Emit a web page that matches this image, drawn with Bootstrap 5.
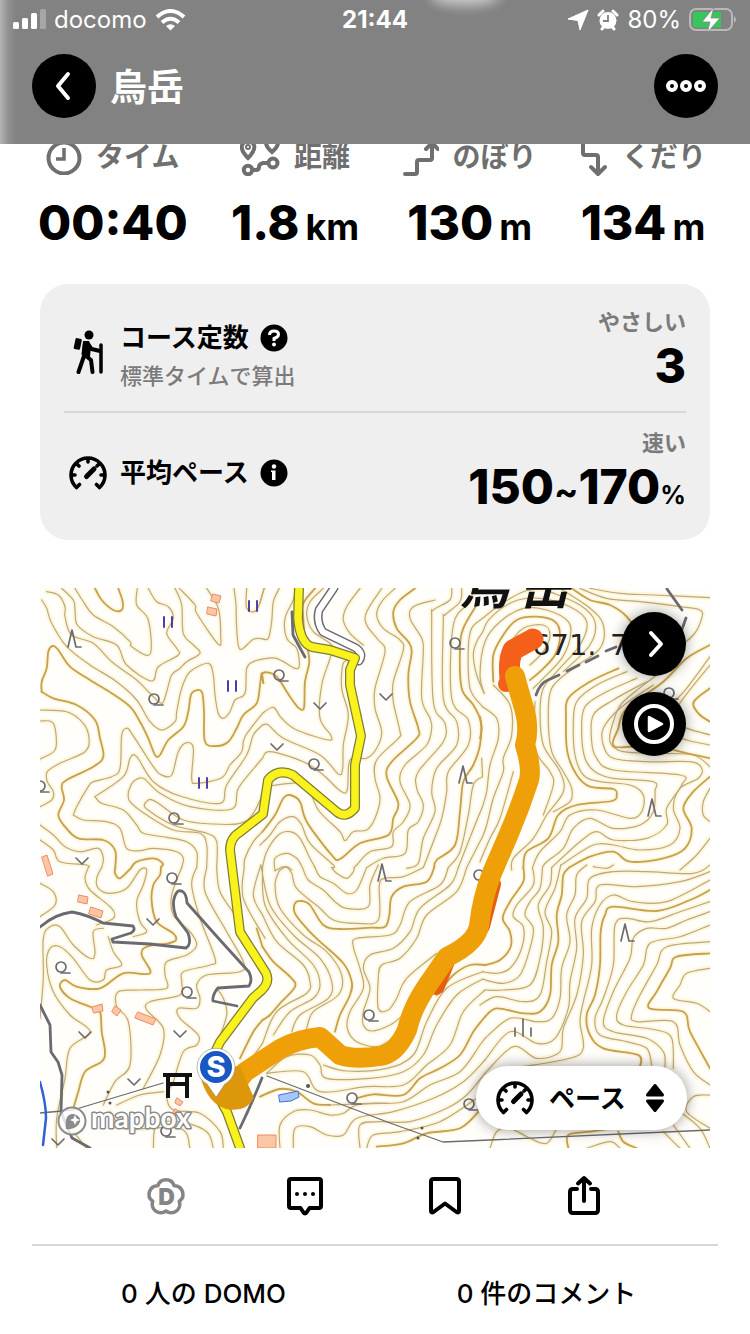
<!DOCTYPE html>
<html lang="ja">
<head>
<meta charset="utf-8">
<meta name="viewport" content="width=device-width, initial-scale=1">
<title>烏岳</title>
<link href="https://cdn.jsdelivr.net/npm/bootstrap@5.3.0/dist/css/bootstrap.min.css" rel="stylesheet">
<style>
  body { font-family: Inter, "Noto Sans CJK JP", sans-serif; color: #000; background: #fff; }
  .app-head { background: linear-gradient(90deg, #b4b4b4 0, #929292 8px, #828282 16px); height: 144px; color: #fff; overflow: hidden; }
  .app-head::before { content: ""; position: absolute; left: 430px; top: -14px; width: 70px; height: 20px; border-radius: 50%; background: #c8c8c8; filter: blur(6px); }
  .status-bar { height: 40px; font-size: 24px; line-height: 40px; padding: 0 12px; display: grid; grid-template-columns: 1fr auto 1fr; position: relative; }
  .status-bar .clock { font-weight: 700; }
  .title-bar { padding: 12px 32px 0; }
  .screen-title { font-size: 37px; font-weight: 700; line-height: 64px; margin: 4px 0 0 14px; }
  .round-btn { width: 64px; height: 64px; border: 0; border-radius: 50%; background: #000; color: #fff; padding: 0; display: flex; align-items: center; justify-content: center; }
  main { padding-top: 137px; }
  .stats { padding: 0 44px 0 38px; margin: 0; }
  .stats dt { font-size: 28px; line-height: 40px; color: #6f6f6f; font-weight: 700; gap: 14px; display: flex; align-items: center; justify-content: center; }
  .stats dd { margin: 22px 0 0; line-height: 48px; }
  .figure-num { font-size: 48px; line-height: 48px; font-weight: 800; }
  .figure-num small { font-size: 36px; font-weight: 700; margin-left: 6px; }
  .summary { margin: 33px 40px 0; background: #efefef; border-radius: 28px; padding: 0 24px; }
  .summary-row { height: 127px; }
  .summary-row + .summary-row { border-top: 2px solid #d7d7d7; height: 129px; padding-bottom: 8px; }
  .row-icon { width: 48px; flex: none; display: flex; justify-content: center; margin-right: 8px; }
  .row-lead { padding-top: 16px; }
  .row-name { font-size: 26px; line-height: 36px; font-weight: 700; gap: 11px; }
  .muted { font-size: 22px; line-height: 32px; color: #7b7b7b; font-weight: 700; }
  .note { font-weight: 500; }
  .help-btn { border: 0; background: none; padding: 0; display: flex; }
  .map-box { margin: 48px 40px 0; overflow: hidden; }
  .map-box > svg { display: block; width: 100%; height: auto; }
  .map-tools { top: 24px; right: 24px; gap: 16px; }
  .lift { box-shadow: 0 0 14px rgba(0,0,0,.4); }
  .mode-pick { right: 23px; bottom: 18px; }
  .mode-pick select { appearance: none; border: 0; border-radius: 32px; background: #fff; height: 64px; width: 211px; padding: 0 60px 0 73px; font-size: 26px; font-weight: 700; color: #000; }
  .mode-pick svg { position: absolute; top: 50%; transform: translateY(-50%); pointer-events: none; }
  .mode-pick svg:first-of-type { left: 20px; }
  .mode-pick svg:last-of-type { right: 22px; }
  .actions { background: #fff; padding: 0 32px; }
  .action-icons { height: 96px; padding: 0 64px; }
  .action-icons button { border: 0; background: none; padding: 0; width: 25%; display: flex; justify-content: center; align-items: center; }
  .counts { border-top: 2px solid #d7d7d7; height: 90px; padding-top: 8px; }
  .counts a { font-size: 26px; line-height: 36px; font-weight: 500; color: #000; text-decoration: none; }
  .minor-line { stroke: #b9a980; stroke-width: 1.2px; }
  .index-line { stroke: #c4a050; stroke-width: 1.8px; }
  .halo { stroke: #fff6da; stroke-width: 5px; }
</style>
</head>
<body>
<header class="app-head fixed-top">
  <div class="status-bar">
    <div class="d-flex align-items-center gap-2">
      <svg width="34" height="22" viewBox="0 0 34 22" fill="#fff"><rect x="1" y="13" width="6" height="7" rx="1.500"/><rect x="10" y="9" width="6" height="11" rx="1.500"/><rect x="19" y="4" width="6" height="16" rx="1.500"/><rect x="28" y="0" width="6" height="20" rx="1.500" opacity=".3"/></svg>
      <span>docomo</span>
      <svg width="31" height="22" viewBox="0 0 31 22" fill="none" stroke="#fff" stroke-width="4"><path d="M2 8Q15.500-4 29 8M7 13.500Q15.500 6 24 13.500"/><path d="M15.500 21.500l-4.500-4.500q4.500-3.500 9 0z" fill="#fff" stroke="none"/></svg>
    </div>
    <div class="clock">21:44</div>
    <div class="d-flex align-items-center justify-content-end">
      <svg class="me-2" width="22" height="22" viewBox="0 0 22 22" fill="#fff"><path d="M21 1 13 21 11 11.500 1 10z" stroke="#fff" stroke-linejoin="round"/></svg>
      <svg class="me-2" width="22" height="22" viewBox="0 0 22 22"><circle cx="11" cy="11.500" r="8.500" fill="#fff"/><path d="M2 6l4-4M20 6l-4-4M5 20l2-2.500M17 20l-2-2.500" stroke="#fff" stroke-width="3" stroke-linecap="round"/><path d="M11 6v6H6" fill="none" stroke="#828282" stroke-width="1.800"/></svg>
      <span class="me-2">80%</span>
      <svg width="49" height="26" viewBox="0 0 49 26"><rect x="1" y="2" width="42" height="21" rx="6" fill="none" stroke="#b9b9b9" stroke-width="2"/><path d="M7 5h25v15.500H7a3 3 0 0 1-3-3V8a3 3 0 0 1 3-3z" fill="#36c75a"/><path d="M45 9q4 3.500 0 7z" fill="#b9b9b9"/><path d="M25 0 13 15h8l-3 11 13-15h-9z" fill="#fff" stroke="#828282" stroke-width=".8"/></svg>
    </div>
  </div>
  <div class="title-bar d-flex align-items-center">
    <button class="round-btn" type="button" aria-label="戻る"><svg width="24" height="32" viewBox="0 0 24 32" fill="none" stroke="#fff" stroke-width="4" stroke-linecap="round" stroke-linejoin="round"><path d="M16 4 6 16l10 12"/></svg></button>
    <h1 class="screen-title">烏岳</h1>
    <button class="round-btn ms-auto" type="button" aria-label="メニュー"><svg width="42" height="14" viewBox="0 0 42 14" fill="none" stroke="#fff" stroke-width="4"><circle cx="7" cy="7" r="4"/><circle cx="21" cy="7" r="4"/><circle cx="35" cy="7" r="4"/></svg></button>
  </div>
</header>

<main>
  <dl class="stats d-flex justify-content-between text-center">
    <div>
      <dt><svg width="36" height="36" viewBox="0 0 36 36" fill="none" stroke="#6f6f6f" stroke-width="4"><circle cx="18" cy="19" r="15.500"/><path d="M18 9v11h-8" stroke-width="3.500"/></svg>タイム</dt>
      <dd class="figure-num">00:40</dd>
    </div>
    <div>
      <dt><svg width="40" height="38" viewBox="0 0 40 38" fill="none" stroke="#6f6f6f" stroke-width="4"><path d="M8 20Q1 13 1.800 8a6.500 6.500 0 0 1 12.500 0Q15 13 8 20z"/><circle cx="8" cy="9" r="1"/><path d="M32 14Q25 8 26 3a6.500 6.500 0 0 1 12 0Q39 8 32 14z"/><circle cx="8" cy="32" r="4.200"/><circle cx="33" cy="25" r="4.500"/><path d="M12 32h4q3 0 3-3t4-4h5"/></svg>距離</dt>
      <dd class="figure-num">1.8<small>km</small></dd>
    </div>
    <div>
      <dt><svg width="36" height="40" viewBox="0 0 36 40" fill="none" stroke="#6f6f6f" stroke-width="4" stroke-linecap="round" stroke-linejoin="round"><path d="M2 37h10q2 0 2-2V25q0-2 2-2h11q2 0 2-2V8M23 12l6-6 6 6"/></svg>のぼり</dt>
      <dd class="figure-num">130<small>m</small></dd>
    </div>
    <div>
      <dt><svg width="28" height="40" viewBox="0 0 28 40" fill="none" stroke="#6f6f6f" stroke-width="4" stroke-linecap="round" stroke-linejoin="round"><path d="M3 2v14q0 2 2 2h11q2 0 2 2v16M11 30l7 7 7-7"/></svg>くだり</dt>
      <dd class="figure-num">134<small>m</small></dd>
    </div>
  </dl>

  <section class="summary">
    <div class="summary-row d-flex align-items-center">
      <span class="row-icon pt-2"><svg width="30" height="44" viewBox="0 0 30 44" fill="#000"><circle cx="16" cy="5" r="4.500"/><path d="M3.500 8 8 9q1 .3.800 1.300L7 19q-.3 1-1.300.8L1.500 19q-1-.3-.8-1.300L2.500 9q.2-1 1-1z"/><path d="M12 13l-1.500 11 7.500 6 1.500 12M11 26 5.500 42M14.500 13.500l4 5.500 8.500 2" fill="none" stroke="#000" stroke-width="4" stroke-linecap="round" stroke-linejoin="round"/><path d="M10 11h6l2 5-1 11-8-2z"/><path d="M28 15v27" stroke="#000" stroke-width="3.500" stroke-linecap="round"/></svg></span>
      <div class="row-lead">
        <div class="row-name d-flex align-items-center">コース定数
          <button class="help-btn" type="button" aria-label="コース定数について"><svg width="28" height="28" viewBox="0 0 28 28"><circle cx="14" cy="14" r="13.500"/><path d="M9.500 11q0-4 4.500-4t4.500 3.500Q18.500 13 14 14.500v2.500" fill="none" stroke="#fff" stroke-width="3"/><circle cx="14" cy="20.500" r="1.900" fill="#fff"/></svg></button>
        </div>
        <div class="muted note mt-1">標準タイムで算出</div>
      </div>
      <div class="ms-auto text-end">
        <div class="muted">やさしい</div>
        <div class="figure-num mt-1">3</div>
      </div>
    </div>
    <div class="summary-row d-flex align-items-center">
      <span class="row-icon"><svg width="38" height="34" viewBox="0 0 38 34"><g id="gauge" fill="none" stroke="#000" stroke-width="3.600" stroke-linecap="round"><path d="M7.500 31.500A17 17 0 1 1 30.500 31.500M7.500 31.500l3-3M30.500 31.500l-3-3M2.500 19H6M32 19h3.500M7.500 7.500 10 10M19 2.500V6M30.500 7.500 28 10" stroke-width="3.600"/><path d="M17.500 20.500 25 13" stroke-width="5"/></g></svg></span>
      <div class="row-name d-flex align-items-center">平均ペース
        <button class="help-btn" type="button" aria-label="平均ペースについて"><svg width="28" height="28" viewBox="0 0 28 28"><circle cx="14" cy="14" r="13.500"/><circle cx="14" cy="7.500" r="2.200" fill="#fff"/><path d="M11 11.500h4.500V21h-3.500v-8H11z" fill="#fff"/></svg></button>
      </div>
      <div class="ms-auto text-end">
        <div class="muted">速い</div>
        <div class="figure-num mt-1">150<small class="m-0">~</small>170<small class="fs-3 m-0">%</small></div>
      </div>
    </div>
  </section>

  <section class="map-box position-relative">
    <svg viewBox="0 0 670 560" fill="none" stroke-linejoin="round" stroke-linecap="round" role="img" aria-label="コース地図">
      <defs>
        <g id="minor"></g><g id="major"></g>
        <g id="leaf"><circle r="5" cx="0" cy="0"/><path d="M0 6h9"/></g>
        <path id="field" d="M-6-3 0 3 6-3"/>
        <path id="pine" d="M-4 9 0-8 4 9H9"/>
        <path id="paddy" d="M-4-5V5M4-5V5"/>
      </defs>
      <rect width="670" height="560" fill="#fffefb"/>
      <use href="#minor" class="halo"/><use href="#major" class="halo"/>
      <use href="#minor" class="minor-line"/><use href="#major" class="index-line"/>
      <!-- lanes, stream and power line -->
      <g stroke="#6a6a70" stroke-width="2.800">
        <path d="M0 339Q15 326 32 324 48 327 63 335L93 338Q96 342 91 345L72 351 73 354 110 356 146 360Q152 356 148 345L136 329Q130 312 138 303 146 301 147 315L180 352 209 384Q213 392 209 398L178 400Q172 407 173 413L197 418"/>
        <path d="M0 417 10 437 11 464 18 474 22 487 21 524 32 550 50 560"/>
        <path d="M200 540Q212 515 222 490"/>
        <path d="M252 24 253 47 265 69"/>
        <path d="M627 1 642 22M646 30l-5 14"/>
        <path d="M496 107Q500 95 508 92L519 87M527 83l12-6M546 74l12-6M566 63l10-4"/>
      </g>
      <path d="M294 0 279 22Q276 34 283 44L316 60Q324 66 319 73" stroke="#6a6a70" stroke-width="9"/>
      <path d="M294 0 279 22Q276 34 283 44L316 60Q324 66 319 73" stroke="#fff" stroke-width="6"/>
      <path d="M0 525 33 522 123 495M227 488 350 535 403 554 450 552 670 542" stroke="#6a6a70" stroke-width="1.300"/>
      <path d="M0 494Q6 515 6 530L3 557" stroke="#2e62d6" stroke-width="2.500"/>
      <!-- main road -->
      <g stroke="#7f7c35" stroke-width="10">
        <path d="M259 0 258 30Q260 55 272 59L290 62 315 70 310 82 310 97 321 148 315 177 315 220Q306 231 297 224L253 187Q238 180 228 192L223 226 200 244Q190 250 190 262L200 344 226 385Q230 394 222 402L213 410 180 454 165 485 187 524 200 560"/>
      </g>
      <path d="M259 0 258 30Q260 55 272 59L290 62 315 70 310 82 310 97 321 148 315 177 315 220Q306 231 297 224L253 187Q238 180 228 192L223 226 200 244Q190 250 190 262L200 344 226 385Q230 394 222 402L213 410 180 454 165 485 187 524 200 560" stroke="#f9f21c" stroke-width="7.500"/>
      <!-- buildings -->
      <g fill="#fbc6a5" stroke="#f08a60" stroke-width="1">
        <path d="M173 6l8 2-2 7-8-2zM168 19l9 2-1 7-9-2zM2 269l5-2 6 19-5 2zM39 307l9 2-1 7-9-2zM51 319l12 4-2 7-12-4zM52 419l10-3 1 7-9 2zM75 418l6 4-4 6-5-4zM98 424l18 7-3 6-18-7zM137 510l6 4-3 4-5-3zM135 521l6 3-3 4-5-3zM218 547h18v13h-18z"/>
      </g>
      <path d="M239 507l19-4 1 6-8 4-11 1z" fill="#a9c6fb" stroke="#3c6fe0"/>
      <!-- vegetation marks -->
      <g stroke="#6b6b70" stroke-width="1.700">
        <use href="#leaf" x="114" y="111"/><use href="#leaf" x="134" y="230"/><use href="#leaf" x="239" y="87"/><use href="#leaf" x="274" y="176"/><use href="#leaf" x="415" y="55"/><use href="#leaf" x="0" y="198"/><use href="#leaf" x="132" y="290"/><use href="#leaf" x="21" y="379"/><use href="#leaf" x="147" y="404"/><use href="#leaf" x="126" y="543"/><use href="#leaf" x="329" y="427"/><use href="#leaf" x="312" y="510"/><use href="#leaf" x="429" y="516"/><use href="#leaf" x="439" y="287"/><use href="#leaf" x="629" y="105"/>
        <use href="#field" x="42" y="273"/><use href="#field" x="280" y="118"/><use href="#field" x="346" y="109"/><use href="#field" x="237" y="159"/><use href="#field" x="113" y="334"/><use href="#field" x="45" y="447"/><use href="#field" x="140" y="446"/><use href="#field" x="94" y="494"/><use href="#field" x="18" y="554"/>
        <use href="#pine" x="32" y="50"/><use href="#pine" x="423" y="186"/><use href="#pine" x="342" y="284"/><use href="#pine" x="612" y="219"/><use href="#pine" x="585" y="344"/>
        <path d="M475 440v8M483 431v17M491 440v8"/>
      </g>
      <g stroke="#4d3fa8" stroke-width="2"><use href="#paddy" x="128" y="34"/><use href="#paddy" x="213" y="18"/><use href="#paddy" x="192" y="98"/><use href="#paddy" x="163" y="195"/></g>
      <g fill="#555"><circle cx="268" cy="498" r="2"/><circle cx="68" cy="504" r="1.500"/><circle cx="70" cy="515" r="1.500"/><circle cx="382" cy="540" r="1.500"/><circle cx="378" cy="550" r="1.500"/></g>
      <text x="420" y="16" font-family="'Noto Sans CJK JP', sans-serif" font-size="50" font-weight="700" font-style="italic" fill="#111">烏</text>
      <text x="480" y="16" font-family="'Noto Sans CJK JP', sans-serif" font-size="50" font-weight="700" font-style="italic" fill="#111">岳</text>
      <path d="M470 64l5-10 5 10z" fill="#222"/>
      <g font-family="'DejaVu Sans', sans-serif" font-size="29" fill="#222"><text x="492" y="67">671.</text><text x="570" y="67">7</text></g>
      <!-- recorded track -->
      <path d="M493 51Q482 57 473 62 468 72 470 90" stroke="#f4601a" stroke-width="21"/>
      <circle cx="466" cy="96" r="8" fill="#f4601a"/>
      <path d="M452 296 441 338M406 373 396 398" stroke="#e85d10" stroke-width="18"/>
      <path d="M475 88Q478 100 484 120T485 157Q492 180 489 192 480 220 468 248L452 285Q442 310 439 338 436 355 407 369L387 398Q372 420 367 442 356 466 340 468 315 472 300 467L280 449Q258 451 240 461L205 484 190 503" stroke="#efa008" stroke-width="20"/>
      <path d="M160 488Q168 516 186 521 206 525 214 510L200 478 180 480z" fill="#dd970b"/>
      <!-- shrine -->
      <path d="M123 487h29M128 487v23M147 487v23M126 496h23" stroke="#111" stroke-width="4" stroke-linecap="butt"/>
      <!-- start pin -->
      <path d="M176 509 167 496A19 19 0 1 1 185 496z" fill="#fff" stroke="#888" stroke-width=".6"/>
      <circle cx="176" cy="479" r="16" fill="#1957c2"/>
      <text x="176" y="489" text-anchor="middle" font-family="Inter, sans-serif" font-size="29" font-weight="800" fill="#fff">S</text>
      <!-- map credit -->
      <circle cx="32" cy="533" r="13.500" fill="#fff" fill-opacity=".8" stroke="#8b8b8b" stroke-width="2"/>
      <path d="M26 541q-2-16 8-15 9 3 5 10-4 6-13 5z" fill="#8b8b8b"/><path d="m35 527 1.500 3.500L40 532l-3.500 1.500L35 537l-1.500-3.500L30 532l3.500-1.500z" fill="#fff"/>
      <text x="51" y="540" font-family="Lato, sans-serif" font-size="28" font-weight="700" fill="#fff" stroke="#8b8b8b" stroke-width="3" paint-order="stroke">mapbox</text>
    </svg>
    <div class="map-tools position-absolute d-flex flex-column">
      <button class="round-btn lift" type="button" aria-label="地図を開く"><svg width="24" height="32" viewBox="0 0 24 32" fill="none" stroke="#fff" stroke-width="4" stroke-linecap="round" stroke-linejoin="round"><path d="M9 5l10 11L9 27"/></svg></button>
      <button class="round-btn lift" type="button" aria-label="再生"><svg width="42" height="42" viewBox="0 0 42 42"><circle cx="21" cy="21" r="18" fill="none" stroke="#fff" stroke-width="4"/><path d="M16 14v14l13-7z" fill="#fff" stroke="#fff" stroke-width="2.500" stroke-linejoin="round"/></svg></button>
    </div>
    <label class="mode-pick position-absolute">
      <select class="lift" aria-label="表示"><option>ペース</option></select>
      <svg width="38" height="34" viewBox="0 0 38 34"><use href="#gauge"/></svg>
      <svg width="20" height="30" viewBox="0 0 20 30"><path d="M10 2.500 17.500 12h-15zM10 27.500 17.500 18h-15z" stroke="#000" stroke-width="3" stroke-linejoin="round"/></svg>
    </label>
  </section>
</main>

<footer class="actions sticky-bottom">
  <div class="action-icons d-flex">
    <button type="button" aria-label="DOMO"><svg width="42" height="42" viewBox="0 0 42 42"><path d="M12.800 10.700a8.600 8.600 0 0 1 16.400 0A8.600 8.600 0 0 1 34.300 26.300A8.600 8.600 0 0 1 21 36A8.600 8.600 0 0 1 7.700 26.300A8.600 8.600 0 0 1 12.800 10.700z" fill="none" stroke="#858585" stroke-width="3.600" stroke-linejoin="round"/><text x="21.500" y="30" text-anchor="middle" font-size="23" font-weight="900" fill="#858585">D</text></svg></button>
    <button type="button" aria-label="コメント"><svg width="38" height="42" viewBox="0 0 38 42" fill="none" stroke="#000" stroke-width="4" stroke-linejoin="round"><path d="M5 4h28q2 0 2 2v25q0 2-2 2h-9.500l-3 4.500q-1.500 2-3 0l-3-4.500H5q-2 0-2-2V6q0-2 2-2z"/><g fill="#000" stroke="none"><circle cx="11" cy="19" r="2"/><circle cx="19" cy="19" r="2"/><circle cx="27" cy="19" r="2"/></g></svg></button>
    <button type="button" aria-label="ブックマーク"><svg width="34" height="42" viewBox="0 0 34 42" fill="none" stroke="#000" stroke-width="4" stroke-linejoin="round"><path d="M5.500 4h23q2.500 0 2.500 2.500v29q0 3-2.500 1.500L17 28.500 5.500 37Q3 38.500 3 35.500v-29Q3 4 5.500 4z"/></svg></button>
    <button type="button" aria-label="共有"><svg width="34" height="42" viewBox="0 0 34 42" fill="none" stroke="#000" stroke-width="4" stroke-linecap="round" stroke-linejoin="round"><path d="M10 14H6q-3 0-3 3v18q0 3 3 3h22q3 0 3-3V17q0-3-3-3h-4M17 26V4M11 8.500 17 3l6 5.500"/></svg></button>
  </div>
  <div class="counts d-flex align-items-center text-center">
    <a class="w-50" href="#">0 人の DOMO</a>
    <a class="w-50" href="#">0 件のコメント</a>
  </div>
</footer>

<script src="https://cdn.jsdelivr.net/npm/bootstrap@5.3.0/dist/js/bootstrap.bundle.min.js"></script>
<script>
// Contour lines by map sheet: points are thirds of a map unit from the sheet's origin.
const sheets = [
{ at: [0,-3],
  major: ["165,10 185,45 220,75 245,75 248,50 235,10","5,320 5,290 20,250 25,200 38,183 55,195 90,245 150,285 215,325 270,365 300,410 325,460 345,510 360,510 385,465 430,425 445,380 455,325 485,320 492,380 495,470 530,483 565,470 590,430 610,390 650,355 660,300 665,265 675,262","5,320 40,340 110,360 165,405 180,460 190,515 160,545 80,585 65,605 72,645 55,690 75,725 115,760 190,765 225,795 230,855","265,855 290,830 340,820 368,835 355,855"],
  minor: ["20,20 55,30 75,65 75,95 95,150 160,175 215,230 290,285 330,325 365,355 380,320 395,270 420,250 440,230 480,205 460,180 430,145 425,60 405,10","5,45 20,70 35,115 80,185 150,240 230,290 290,345 330,410 365,435 405,410 410,380 425,310 450,260 505,235 520,270 525,330 535,385 550,400 570,380 585,345 615,325 620,250 640,230 675,222","65,10 100,45 105,75 112,120 160,155 230,180 260,240 335,288 355,245 415,210 410,190 380,145 400,100 385,65 350,50 325,10","105,10 130,50 160,90 220,125 270,170 275,185 330,208 325,105 290,60 292,10","418,10 465,60 470,85 535,178 542,150 535,70 500,10","582,10 588,60 590,130 600,193 640,163 675,163","620,10 620,70 650,75 670,10","0,375 80,380 130,415 147,460 135,500 60,535 22,560 22,590 40,620 35,645 0,665","0,408 35,410 47,440 45,495 0,522","100,690 110,665 145,605 160,590 215,575 240,550 245,450 260,430 275,445 340,545 365,570 395,570 415,500 440,473 460,490 455,580 470,595 545,578 570,540 605,500 615,455 675,385","100,690 130,705 200,710 240,730 260,790 300,797 340,790 410,800 430,820 425,855","165,635 250,575 270,520 290,515 340,590 420,633 540,655 560,600 620,510 640,450 675,415","165,635 185,655 250,675 290,720 310,745 380,757 440,770 470,800 470,855","265,620 280,590 310,580 360,625 450,665 575,672 595,610 650,540 675,510","265,620 270,650 320,690 400,735 480,745 500,780 500,855","315,655 330,643 355,655 430,705 520,717 600,715 640,685 665,610","315,655 320,672 400,720 500,745 530,770 530,855","0,720 40,750 75,785 120,800 175,790 190,820 180,855","0,765 40,795 60,830 140,840 145,855","615,855 615,820 640,770 675,740"] },
{ at: [220,-3],
  major: ["5,325 5,270 20,262 50,275 90,335 115,368 132,368 135,290 148,230 140,180","465,10 420,45 400,80 410,130 445,170 455,200 445,270 450,350 475,430 470,460 395,530 380,575 415,655 400,700 385,750 300,775 240,822 215,810 140,710 120,650 90,630 70,640 45,690 0,740","650,60 610,130 600,190 605,310 640,360 662,410 660,480 640,540 610,590 600,680 585,780 530,825 520,855","165,10 130,55 130,100 135,180"],
  minor: ["0,55 5,35 15,10","0,160 25,160 35,110 40,50 58,10","0,222 50,220 105,250 118,240 110,190 80,160 75,100 100,45 105,10","0,385 40,367 65,400 110,435 205,465 212,450 180,400 185,300 210,220 215,180 160,140 140,90 150,50 190,10","0,425 25,420 70,460 180,510 235,567 248,550 250,480 265,390 245,310 250,235 275,225","0,530 30,500 130,530 190,570 240,617 262,615 270,525 320,520 350,490 365,440 345,370 345,310 375,200 355,165 320,120 320,80 365,10","300,10 260,65 250,105 270,145 310,180","405,10 365,50 350,90 370,130 420,165 430,195 400,290 400,350 420,440 415,460 350,525 345,580 360,640 345,700 320,735 280,740 255,767 240,740 175,675 140,600 90,595 30,600","525,45 460,65 450,100 485,160 490,200 485,340 510,400 515,430 500,480 435,540 420,590 450,660 430,710 400,740 395,785 330,800 290,840 280,855","575,10 570,45 520,75 515,100 520,350 555,415 550,470 475,560 470,610 490,660 475,710 445,735 435,805 370,820 330,855","605,10 600,50 555,90 550,110 550,340 590,410 590,480 530,550 515,620 525,680 490,760 475,835 440,850","640,10 630,50 580,120 575,340 625,405 625,480 565,560 560,620 545,700 520,770 500,855","675,90 635,130 625,190 630,310 675,370","675,135 650,170 640,210 650,270 675,320","675,580 640,600 625,690 600,800 570,855","675,650 645,720 600,855","675,740 630,855","0,780 30,750 60,710 100,695 125,720 150,775 220,840 230,855","10,855 20,800 55,750 90,740 120,760 150,820 170,855","35,855 45,820 80,805 110,820 125,855","60,855 80,845 95,855"] },
{ at: [440,-3],
  major: ["275,10 330,45 390,60 440,95 500,180","40,290 40,210 70,150 110,105 170,95 225,110 240,150 225,210 180,260 150,285","415,250 330,290 265,340 258,400 262,500 290,570 330,605 400,612 410,630 395,648 290,660 235,690 205,760 140,800 130,855","690,520 600,500 520,480 405,485 415,430 440,370 550,290 620,220 690,180","690,310 650,340 640,360 660,390 690,410","690,575 640,620 610,670 635,730 615,790 550,820 450,830 400,800 330,815 260,855","0,395 5,430 0,460"],
  minor: ["100,215 90,180 130,130 190,120 210,150 190,200 150,240","10,330 0,270 15,170 60,110 130,70 200,75 265,110 270,160 245,220 190,280 160,310","0,150 30,100 100,50 180,40 270,65 320,110 300,180 230,260 190,310 180,380 190,480 240,560 250,620 200,690 160,760 100,820 95,855","0,110 60,60 130,20 200,10","300,10 380,40 480,50 600,65 660,75 665,100 640,150 590,190","330,10 420,25 520,30 690,38","240,10 330,70 370,120 360,190 280,250 215,310 205,400 215,500 250,560 275,610 270,650 220,680","210,20 300,60 345,110 330,180 250,260","440,260 350,300 290,350 280,420 285,510 310,570 360,590 450,600 490,630 485,680 450,700 350,675 270,690 240,740 180,800 160,855","470,280 380,320 315,365 305,440 315,520 345,560 400,580 520,590 525,620 520,680 480,720 400,730 330,700 280,730 250,790 200,830 190,855","500,290 400,345 340,390 335,470 350,520 400,555 600,570 605,600 560,670 560,720 500,760 400,765 350,740 300,770 220,855","520,300 420,370 370,430 370,480 400,520 500,530 630,530 665,550 655,580 600,610 580,670 600,730 570,780 480,795 400,780 340,780 250,840","690,450 600,420 590,370 690,240","690,480 620,465 560,440 560,380 620,310 690,215","690,610 670,650 670,690 690,710","690,760 650,810 600,855","690,545 640,510 540,505 430,500 390,470 400,410 430,350 530,270","0,360 50,400 55,460 30,540 20,620 0,680","40,300 90,360 95,450 70,520 70,560 40,640 20,720 0,770","5,520 0,570","100,560 60,700 30,760 0,830","165,350 165,490 210,560 220,600 190,690"] },
{ at: [0,277],
  major: ["222,0 225,25 240,40 280,5","370,0 360,30 340,60 335,110 350,170 400,205 408,225 385,235 320,245 305,270 330,325 250,325 180,370 110,365 75,345 60,365 90,400 150,425 180,440 185,500 195,560 185,590 135,620 115,680 100,730","675,460 640,500 600,580","650,190 675,250"],
  minor: ["0,55 40,80 45,120 0,155","145,0 135,40 150,75 215,130 220,160 170,180","190,0 170,40 175,70 210,85 260,70 300,15 320,15 310,60 290,110 300,170 320,200 280,215","425,0 395,90 400,150 450,200 470,240 440,270 380,290 375,330 380,370 300,375 235,380 230,425 265,470 270,600 225,650 190,720","50,850 50,760 75,640 90,550 150,500 90,450 40,380 20,300 30,250 60,245 100,280 150,345 190,345 200,315 245,300 220,260 205,215","0,460 10,340 10,220 30,185 60,185 100,240 150,280 165,265 160,200 190,190","470,0 455,60 480,160 525,280 510,300 430,320 425,350 420,390 330,410 320,435 370,490 360,570 310,670","500,0 495,80 560,200 610,290 600,320 500,330 470,360 480,400 470,430 415,430 420,460 475,510 470,540 430,560 400,650 380,690 400,735 480,745 540,800 550,850","530,0 540,80 590,160 630,250","610,0 610,100 675,220","645,0 640,90 675,160","530,540 560,450 550,400 530,370","340,850 350,780 420,770 500,800 520,850","210,740 260,790 420,790 450,850","230,720 300,690 370,680","100,800 140,850","600,630 675,560"] },
{ at: [220,277],
  major: ["0,240 40,290 90,335 105,365 60,415 30,450 0,470","225,500 240,450 270,390 275,350 250,295 180,230 140,190 105,145 105,115 125,108 150,120 190,180 240,192 330,188 375,185 388,150 395,95 430,65 500,50 525,0","690,300 630,300 580,330 530,390","690,445 640,500 600,570 540,610 480,640 430,690 340,688 290,700","0,695 60,672 110,680 160,715 210,720","660,735 600,790 500,805 430,835 350,845"],
  minor: ["0,140 50,230 130,300 150,350 140,385 50,440 0,510","5,0 15,120 80,220 160,300 180,360 160,400 90,440 40,510","20,0 30,120 100,210 180,280 215,350 205,400 120,450 95,500","55,20 45,60 60,130 130,210 200,260 245,330 235,390 160,440 140,490","55,20 75,5 95,25 110,70 180,130 220,165 290,175 355,165 358,60 375,40 430,35 480,0","130,0 145,45 190,75 225,110 260,130 325,125 330,60 355,0","160,0 180,35 220,55 260,85 290,75 310,0","200,0 230,25 260,40 280,20 285,0","560,0 540,60 450,110 420,180 390,210 290,220 280,245 300,310 310,370 270,440 262,490 290,530 350,545 400,520","590,0 570,60 480,130 450,200 400,250 330,270 310,310 330,370 310,440 310,480 335,498 390,480 430,450","610,0 590,80 500,150 470,220 420,280 365,300 355,340 355,430 385,435 410,400 440,340 530,265","20,625 80,575 150,570 180,600 200,640 330,640 430,620 490,570 530,480 590,390 675,340","20,625 130,620 180,680 320,665 430,660 500,600 570,540 610,440 690,370","190,600 260,618 380,610 460,570 500,470 560,370 675,320","210,720 330,715 430,710 510,660 600,620 660,540 690,510","60,850 60,780 100,740 150,735 210,750 250,745 290,720 380,715","100,850 105,790 150,785 200,810 250,810 290,760 400,740 520,700 610,650 690,580","300,850 300,780 360,770 450,770 560,730 620,690 690,620","320,850 340,810 420,800 540,770 650,700"] },
{ at: [440,277],
  major: ["130,0 130,50 90,110 68,160 90,200 92,245 60,285 0,300","275,0 250,30 245,90 230,150 235,230 215,300 210,390 180,440 130,445 50,430 0,465","690,75 630,105 530,138 400,125 375,150 362,200 360,300 345,390 320,450 330,510 370,550 475,570 480,605","690,265 590,275 570,310 530,380 508,430 610,440 630,500 690,610","265,850 265,810 330,800 400,790","415,800 430,830 470,850"],
  minor: ["155,0 160,60 110,120 100,155 130,185 125,250 90,310 50,325 0,320","185,0 180,70 150,110 135,150 160,190 150,250 120,330 70,355 0,345","210,0 210,60 175,120 190,190 180,280 150,360 70,375 0,380","235,0 225,70 195,140 215,200 200,290 180,390 130,410 50,395 0,420","320,0 290,30 285,90 260,150 270,230 245,310 240,400 215,460 170,470 90,460 0,530","690,0 640,25 500,20 400,20 330,40 320,100 285,160 290,250 270,350 265,430 225,520 170,535 90,500 0,590","690,20 600,50 470,65 360,60 345,110 305,170 310,270 290,390 250,490 240,560 170,580 100,545 0,630","690,45 560,110 460,110 400,90 360,120 335,190 335,300 310,410 300,470 310,550 270,580 130,605","690,110 600,140 510,170 440,160 405,180 400,300 370,400 345,460 360,510 440,530 500,550 515,600","690,140 620,165 560,190 500,190 460,220 450,280 400,380 370,470 400,500 500,520 550,560 555,605","690,180 600,215 510,235 490,300 440,380 410,450 430,480 530,495 575,520 580,610","690,230 560,245 530,300 480,390 455,450 470,470 580,470 600,540 640,620 690,660","690,310 620,325 600,360 580,400 650,415 690,440","400,0 380,10 340,5","600,740 660,790 690,850","580,780 630,850","550,800 600,850","30,850 50,800 90,790 150,820 200,835 230,790","690,690 640,695 620,740 690,790","320,850 390,830 420,850"] }
];
const lines = [];
sheets.forEach((s, sheet) => {
  for (const kind of ["minor", "major"]) for (const text of s[kind])
    lines.push({ sheet, kind, pts: text.split(" ").map(q => q.split(",").map((v, i) => v / 3 + s.at[i])) });
});
// Join line ends that meet across a sheet edge, each to its nearest partner.
const ends = lines.flatMap(l => [0, l.pts.length - 1].map(i => ({ l, i, p: l.pts[i] })));
const nearEdge = p => Math.abs(p[1] - 280) < 12 || Math.abs(p[0] - 222) < 9 || Math.abs(p[0] - 442) < 9;
const pairs = [];
for (const a of ends) for (const b of ends)
  if (a.l.sheet < b.l.sheet && nearEdge(a.p) && nearEdge(b.p)) {
    const d = Math.hypot(a.p[0] - b.p[0], a.p[1] - b.p[1]);
    if (d < 22) pairs.push({ a, b, d });
  }
pairs.sort((m, n) => m.d - n.d);
const joined = new Set();
for (const { a, b } of pairs) {
  if (joined.has(a) || joined.has(b)) continue;
  joined.add(a).add(b);
  const mid = [(a.p[0] + b.p[0]) / 2, (a.p[1] + b.p[1]) / 2];
  a.l.pts[a.i] = mid; b.l.pts[b.i] = mid;
}
// Catmull-Rom spline through the points of one line.
function spline(p) {
  let d = "M" + p[0];
  for (let i = 0; i < p.length - 1; i++) {
    const a = p[i-1] || p[i], b = p[i], c = p[i+1], e = p[i+2] || c;
    d += "C" + [b[0]+(c[0]-a[0])/6, b[1]+(c[1]-a[1])/6, c[0]-(e[0]-b[0])/6, c[1]-(e[1]-b[1])/6, c[0], c[1]].map(v => v.toFixed(1));
  }
  return d;
}
for (const l of lines) {
  const el = document.createElementNS("http://www.w3.org/2000/svg", "path");
  el.setAttribute("d", spline(l.pts));
  document.getElementById(l.kind).append(el);
}
</script>
</body>
</html>
